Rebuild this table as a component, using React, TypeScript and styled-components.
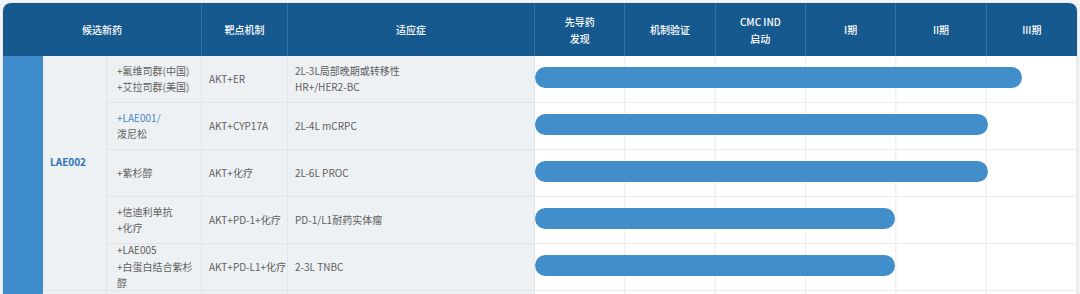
import React from "react";
import styled, { createGlobalStyle } from "styled-components";

const Global = createGlobalStyle`
  html, body { margin: 0; padding: 0; background: #f3f4f6; }
  body { font-family: "Noto Sans CJK SC", "Noto Sans", sans-serif; overflow: hidden; }
`;

const Wrap = styled.div`
  padding: 3px 3px 0 3px;
  height: 291px;
  overflow: hidden;
`;

const Table = styled.div`
  display: grid;
  grid-template-columns: 40px 64px 95px 86px 247px repeat(6, 1fr);
  border-radius: 8px 8px 0 0;
  overflow: hidden;
  background: #fff;
  box-shadow: 0 0 2px rgba(0, 0, 0, 0.18);
  font-size: 10px;
  color: #5f5f5f;
`;

const Th = styled.div<{ $span?: number; $last?: boolean }>`
  grid-column: span ${(p) => p.$span ?? 1};
  height: 53px;
  background: #16598e;
  color: #fff;
  font-weight: 500;
  line-height: 17px;
  display: flex;
  align-items: center;
  justify-content: center;
  text-align: center;
  border-right: ${(p) => (p.$last ? "none" : "1px solid #34709f")};
  box-sizing: border-box;
`;

const Body = styled.div`
  grid-column: 1 / -1;
  display: grid;
  grid-template-columns: subgrid;
  grid-auto-rows: 47px;
`;

const Strip = styled.div`
  grid-column: 1;
  grid-row: 1 / span 6;
  background: #3e8bcb;
`;

const GroupCell = styled.div`
  grid-column: 2;
  grid-row: 1 / span 5;
  background: #edf1f4;
  border-bottom: 1px solid #e1e5e9;
  border-right: 1px solid #e1e5e9;
  box-sizing: border-box;
  padding: 97px 7px 0 7px;
  line-height: 17px;
  color: #2f72b6;
  font-weight: 600;
`;

const GroupTail = styled.div`
  grid-column: 2;
  grid-row: 6;
  background: #edf1f4;
  border-right: 1px solid #e1e5e9;
`;

const Td = styled.div<{ $pad?: number; $col: number }>`
  grid-column: ${(p) => p.$col};
  background: #edf1f4;
  border-bottom: 1px solid #e1e5e9;
  border-right: 1px solid #e1e5e9;
  box-sizing: border-box;
  padding: 0 6px 0 ${(p) => p.$pad ?? 7}px;
  display: flex;
  align-items: center;
  line-height: 16.5px;
  white-space: nowrap;
`;

const Gantt = styled.div`
  grid-column: 6 / span 6;
  border-bottom: 1px solid #ececec;
  box-sizing: border-box;
  background-color: #fff;
  background-image: linear-gradient(
    to right,
    transparent calc(100% - 1px),
    #ebebeb calc(100% - 1px)
  );
  background-size: calc(100% / 6) 100%;
  padding-top: 11px;
`;

const Bar = styled.div<{ $w: number }>`
  width: ${(p) => p.$w}px;
  height: 21px;
  border-radius: 11px;
  background: #418ecb;
`;

const Blue = styled.span`
  color: #4a86c5;
`;

type Row = {
  drug: React.ReactNode;
  target: string;
  ind: React.ReactNode;
  bar: number;
};

const rows: Row[] = [
  {
    drug: (
      <>
        +氟维司群(中国)
        <br />
        +艾拉司群(美国)
      </>
    ),
    target: "AKT+ER",
    ind: (
      <>
        2L-3L局部晚期或转移性
        <br />
        HR+/HER2-BC
      </>
    ),
    bar: 487,
  },
  {
    drug: (
      <>
        <Blue>+LAE001/</Blue>
        <br />
        泼尼松
      </>
    ),
    target: "AKT+CYP17A",
    ind: "2L-4L mCRPC",
    bar: 453,
  },
  { drug: "+紫杉醇", target: "AKT+化疗", ind: "2L-6L PROC", bar: 453 },
  {
    drug: (
      <>
        +信迪利单抗
        <br />
        +化疗
      </>
    ),
    target: "AKT+PD-1+化疗",
    ind: "PD-1/L1耐药实体瘤",
    bar: 360,
  },
  {
    drug: (
      <>
        +LAE005
        <br />
        +白蛋白结合紫杉
        <br />醇
      </>
    ),
    target: "AKT+PD-L1+化疗",
    ind: "2-3L TNBC",
    bar: 360,
  },
];

export default function App() {
  return (
    <>
      <Global />
      <Wrap>
        <Table>
          <Th $span={3}>候选新药</Th>
          <Th>靶点机制</Th>
          <Th>适应症</Th>
          <Th>
            先导药
            <br />
            发现
          </Th>
          <Th>机制验证</Th>
          <Th>
            CMC IND
            <br />
            启动
          </Th>
          <Th>I期</Th>
          <Th>II期</Th>
          <Th $last>III期</Th>
          <Body>
            <Strip />
            <GroupCell>LAE002</GroupCell>
            <GroupTail />
            {rows.map((r, i) => (
              <React.Fragment key={i}>
                <Td $col={3} $pad={10} style={{ gridRow: i + 1 }}>
                  <div>{r.drug}</div>
                </Td>
                <Td $col={4} style={{ gridRow: i + 1 }}>
                  {r.target}
                </Td>
                <Td $col={5} style={{ gridRow: i + 1 }}>
                  <div>{r.ind}</div>
                </Td>
                <Gantt style={{ gridRow: i + 1 }}>
                  <Bar $w={r.bar} />
                </Gantt>
              </React.Fragment>
            ))}
            <Td $col={3} style={{ gridRow: 6 }} />
            <Td $col={4} style={{ gridRow: 6 }} />
            <Td $col={5} style={{ gridRow: 6 }} />
            <Gantt style={{ gridRow: 6 }} />
          </Body>
        </Table>
      </Wrap>
    </>
  );
}
